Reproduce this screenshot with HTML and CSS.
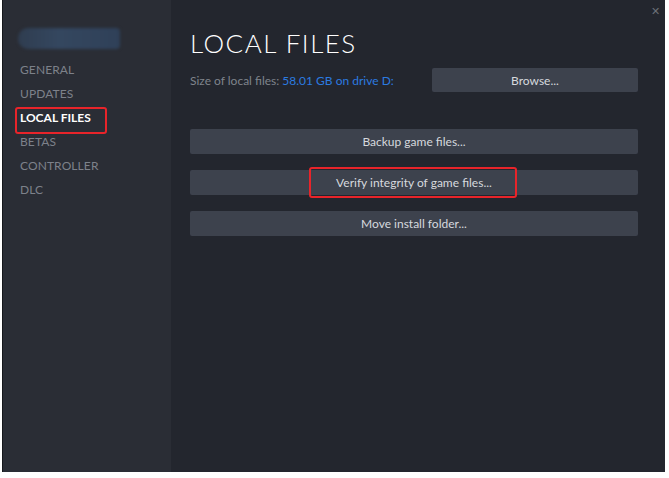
FILE: index.html
```html
<!DOCTYPE html>
<html lang="en">
<head>
  <meta charset="UTF-8">
  <title>Local Files</title>
  <link rel="stylesheet" href="styles.css">
</head>
<body>
  <div class="window">
    <div class="sidebar">
      <div class="game-title"></div>
      <ul class="nav">
        <li>General</li>
        <li>Updates</li>
        <li class="active">Local Files</li>
        <li>Betas</li>
        <li>Controller</li>
        <li>DLC</li>
      </ul>
    </div>

    <div class="main">
      <span class="close">&#x2715;</span>
      <h1>Local Files</h1>
      <div class="size-row">
        <span class="size-label">Size of local files: <span class="size-value">58.01 GB on drive D:</span></span>
        <button class="btn btn-browse">Browse...</button>
      </div>
      <div class="actions">
        <button class="btn">Backup game files...</button>
        <button class="btn mark">Verify integrity of game files...</button>
        <button class="btn">Move install folder...</button>
      </div>
    </div>
  </div>
</body>
</html>
```

FILE: styles.css
```css
* {
  box-sizing: border-box;
}

body {
  margin: 0;
  background: #ffffff;
  font-family: Lato, "Liberation Sans", sans-serif;
}

.window {
  display: flex;
  width: 663px;
  height: 472px;
  margin-left: 2px;
  border-left: 1px solid #15171b;
}

.sidebar {
  width: 168px;
  background: #2a2d35;
  padding-top: 28px;
}

.game-title {
  width: 102px;
  height: 21px;
  margin-left: 15px;
  border-radius: 10px 4px 4px 10px;
  background: linear-gradient(to right, #2f3d50, #34475f 40%, #2f4058);
  filter: blur(1.5px);
}

.nav {
  list-style: none;
  margin: 9px 0 0;
  padding: 0;
}

.nav li {
  position: relative;
  height: 24px;
  line-height: 24px;
  padding-left: 17px;
  font-size: 12px;
  text-transform: uppercase;
  letter-spacing: 0.1px;
  color: #7d818a;
}

.nav li.active {
  color: #ffffff;
  font-weight: bold;
  letter-spacing: 0;
}

.nav li.active::after {
  content: "";
  position: absolute;
  left: 12px;
  top: 1px;
  width: 88px;
  height: 23px;
  border: 2px solid #e8242a;
  border-radius: 3px;
}

.main {
  position: relative;
  flex: 1;
  background: #23262e;
  padding: 25px 27px 0 19px;
}

.close {
  position: absolute;
  top: 4px;
  right: 5px;
  font-size: 11px;
  color: #6b6f77;
}

h1 {
  margin: 0;
  font-size: 26px;
  font-weight: 300;
  text-transform: uppercase;
  letter-spacing: 1.5px;
  color: #ffffff;
  line-height: 36px;
}

.size-row {
  display: flex;
  align-items: center;
  justify-content: space-between;
  margin-top: 7px;
}

.size-label {
  font-size: 12px;
  color: #7f848c;
}

.size-value {
  color: #2b7be0;
}

.btn {
  position: relative;
  display: flex;
  align-items: center;
  justify-content: center;
  height: 25px;
  border: none;
  border-radius: 2px;
  background: #3d424d;
  color: #d6d9de;
  font-family: inherit;
  font-size: 12px;
  padding: 0;
}

.btn-browse {
  width: 206px;
  height: 24px;
}

.actions {
  display: flex;
  flex-direction: column;
  gap: 16px;
  margin-top: 37px;
}

.mark::after {
  content: "";
  position: absolute;
  left: 119px;
  width: 204px;
  top: -3px;
  bottom: -3px;
  border: 2px solid #e8242a;
  border-radius: 3px;
}
```
